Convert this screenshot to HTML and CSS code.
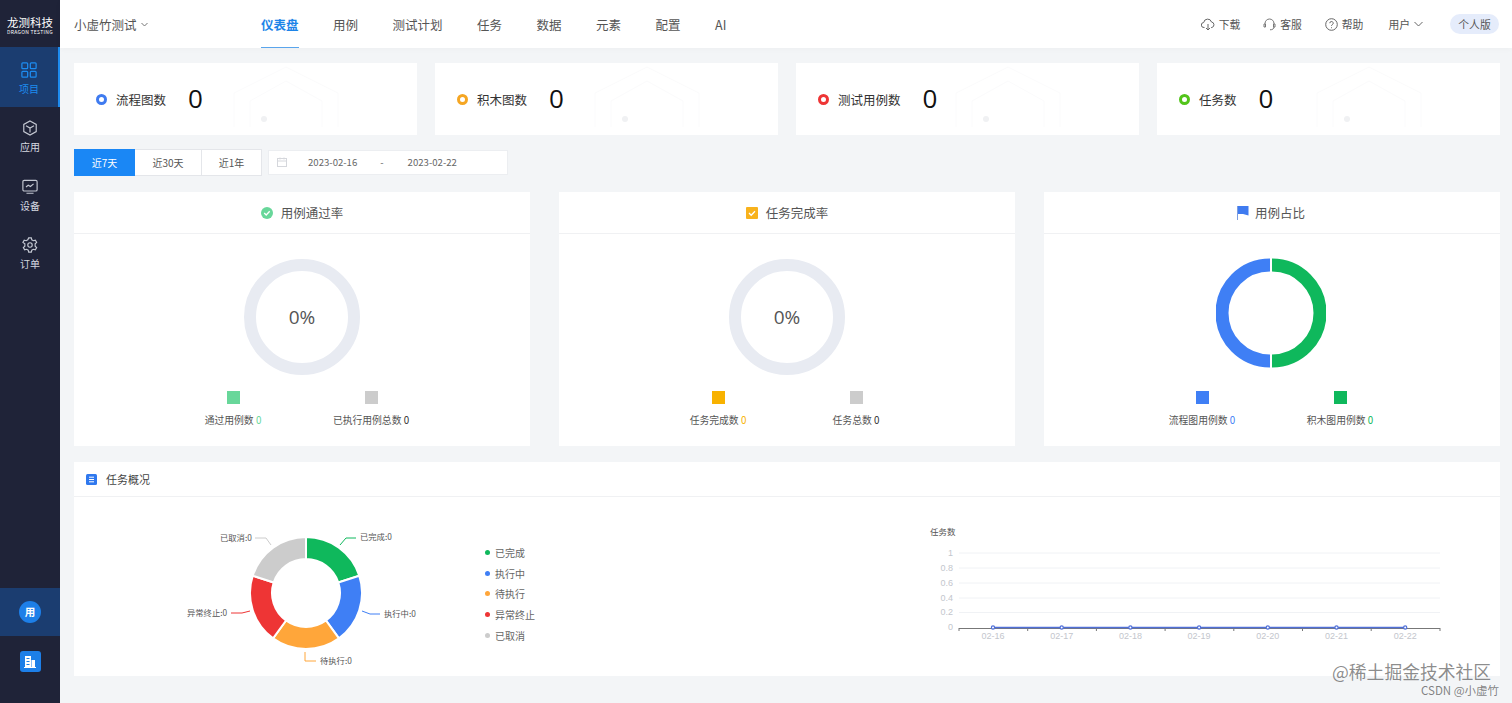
FILE: index.html
```html
<!DOCTYPE html>
<html>
	<head>
		<meta charset="UTF-8">
		<title>仪表盘</title>
		<link rel="stylesheet" href="styles.css">
	</head>
	<body>
		<div class="sidebar">
			<div class="logo">
				<div class="logo-name">龙测科技</div>
				<div class="logo-sub">DRAGON TESTING</div>
			</div>
			<div class="side-item side-active">
				<svg viewBox="0 0 18 18" fill="none" stroke="#1d8cf0" stroke-width="1.400"><rect x="1" y="1" width="6.500" height="6.500" rx="1"/><rect x="10.500" y="1" width="6.500" height="6.500" rx="1"/><rect x="1" y="10.500" width="6.500" height="6.500" rx="1"/><rect x="10.500" y="10.500" width="6.500" height="6.500" rx="1"/></svg>
				<span>项目</span>
			</div>
			<div class="side-item">
				<svg viewBox="0 0 18 18" fill="none" stroke="#c4c8d2" stroke-width="1.300"><path d="M9 1l7 4v8l-7 4-7-4V5z"/><path d="M4.500 6.500L9 9l4.500-2.500M9 9v5"/></svg>
				<span>应用</span>
			</div>
			<div class="side-item">
				<svg viewBox="0 0 18 18" fill="none" stroke="#c4c8d2" stroke-width="1.300"><rect x="1" y="1.500" width="16" height="12" rx="1.500"/><path d="M4.500 9l2.500-2 2.500 1.500 3.500-3M5 16h8"/></svg>
				<span>设备</span>
			</div>
			<div class="side-item">
				<svg viewBox="0 0 18 18" fill="none" stroke="#c4c8d2" stroke-width="1.300"><path d="M7.500 1h3l.5 2.200 1.800 1 2.200-.7 1.500 2.600-1.700 1.600v2.600l1.700 1.600-1.500 2.600-2.200-.7-1.800 1-.5 2.200h-3l-.5-2.200-1.800-1-2.200.7-1.500-2.600 1.700-1.600V7.700L1 6.100l1.500-2.600 2.200.7 1.800-1z"/><circle cx="9" cy="9" r="2.500"/></svg>
				<span>订单</span>
			</div>
			<div class="side-bottom">
				<div class="side-user"><span class="user-circle">用</span></div>
				<div class="side-org">
					<span class="org-box">
						<svg width="14" height="14" viewBox="0 0 14 14" fill="#fff"><path d="M2 1h6v11H2zM8.500 5H12v7H8.500zM1 12h12v1H1z"/><path fill="#1d7fe8" d="M3.500 3h3v1h-3zM3.500 6h3v1h-3zM3.500 9h3v1h-3z"/></svg>
					</span>
				</div>
			</div>
		</div>

		<div class="page">
			<div class="topbar">
				<div class="project">小虚竹测试<svg width="7" height="5" viewBox="0 0 7 5" fill="none" stroke="#777"><path d="M.5 1l3 3 3-3"/></svg></div>
				<div class="tabs">
					<a class="tab tab-active">仪表盘</a>
					<a class="tab">用例</a>
					<a class="tab">测试计划</a>
					<a class="tab">任务</a>
					<a class="tab">数据</a>
					<a class="tab">元素</a>
					<a class="tab">配置</a>
					<a class="tab">AI</a>
				</div>
				<div class="tools">
					<span class="tool">
						<svg width="14" height="13" viewBox="0 0 14 13" fill="none" stroke="#666"><path d="M3.500 9.500H3a2.500 2.500 0 0 1-.3-5A4 4 0 0 1 10.500 4a2.800 2.800 0 0 1 .3 5.500h-.8M7 6v6M5 10l2 2 2-2"/></svg>下载
					</span>
					<span class="tool">
						<svg width="13" height="13" viewBox="0 0 13 13" fill="none" stroke="#777"><path d="M2 6V5.500a4.500 4.500 0 0 1 9 0V6M1 6h1.500v3H1zM10.500 6H12v3h-1.500zM11 9c0 1.800-1.500 2.800-4 2.800"/></svg>客服
					</span>
					<span class="tool tool-help">
						<svg width="13" height="13" viewBox="0 0 13 13" fill="none" stroke="#666"><circle cx="6.500" cy="6.500" r="5.800"/><path d="M4.800 5.200a1.700 1.700 0 1 1 2.500 1.500c-.6.300-.8.600-.8 1.200M6.500 9.300v.9"/></svg>帮助
					</span>
					<span class="tool tool-user">用户<svg width="9" height="6" viewBox="0 0 9 6" fill="none" stroke="#666"><path d="M.5 1l4 4 4-4"/></svg></span>
					<span class="badge">个人版</span>
				</div>
			</div>

			<div class="content">
				<div class="stats">
					<div class="stat">
						<i class="ring ring-blue"></i><span class="stat-label">流程图数</span><span class="stat-num">0</span>
						<svg class="stat-bg" width="110" height="70" viewBox="0 0 110 70" fill="none" stroke="#fbfbfc"><path d="M2 62V28L54 2l52 26v34M18 62V36L54 16l36 20v26"/><circle cx="32" cy="54" r="3" fill="#f0f1f3" stroke="none"/></svg>
					</div>
					<div class="stat">
						<i class="ring ring-orange"></i><span class="stat-label">积木图数</span><span class="stat-num">0</span>
						<svg class="stat-bg" width="110" height="70" viewBox="0 0 110 70" fill="none" stroke="#fbfbfc"><path d="M2 62V28L54 2l52 26v34M18 62V36L54 16l36 20v26"/><circle cx="32" cy="54" r="3" fill="#f0f1f3" stroke="none"/></svg>
					</div>
					<div class="stat">
						<i class="ring ring-red"></i><span class="stat-label">测试用例数</span><span class="stat-num">0</span>
						<svg class="stat-bg" width="110" height="70" viewBox="0 0 110 70" fill="none" stroke="#fbfbfc"><path d="M2 62V28L54 2l52 26v34M18 62V36L54 16l36 20v26"/><circle cx="32" cy="54" r="3" fill="#f0f1f3" stroke="none"/></svg>
					</div>
					<div class="stat">
						<i class="ring ring-green"></i><span class="stat-label">任务数</span><span class="stat-num">0</span>
						<svg class="stat-bg" width="110" height="70" viewBox="0 0 110 70" fill="none" stroke="#fbfbfc"><path d="M2 62V28L54 2l52 26v34M18 62V36L54 16l36 20v26"/><circle cx="32" cy="54" r="3" fill="#f0f1f3" stroke="none"/></svg>
					</div>
				</div>

				<div class="filters">
					<div class="range-btns">
						<span class="range range-on">近7天</span>
						<span class="range range-mid">近30天</span>
						<span class="range">近1年</span>
					</div>
					<div class="dates">
						<svg width="10" height="10" viewBox="0 0 10 10" fill="none" stroke="#d5d7dc"><rect x=".5" y="1.500" width="9" height="8"/><path d="M.5 4h9M3 .5v2M7 .5v2"/></svg>
						<span class="date-from">2023-02-16</span>
						<span class="date-sep">-</span>
						<span class="date-to">2023-02-22</span>
					</div>
				</div>

				<div class="cards">
					<div class="card">
						<div class="card-head">
							<svg width="12" height="12" viewBox="0 0 12 12"><circle cx="6" cy="6" r="6" fill="#68d79a"/><path d="M3.200 6l2 2 3.500-3.800" fill="none" stroke="#fff" stroke-width="1.300"/></svg>
							<span>用例通过率</span>
						</div>
						<div class="ring-wrap">
							<svg width="116" height="116" viewBox="0 0 116 116"><circle cx="58" cy="58" r="52" fill="none" stroke="#e8ebf2" stroke-width="12"/><text class="ring-text" x="58" y="65" text-anchor="middle">0%</text></svg>
						</div>
						<div class="keys">
							<div class="key"><i class="swatch sw-mint"></i><span>通过用例数 <b class="n-mint">0</b></span></div>
							<div class="key"><i class="swatch sw-grey"></i><span>已执行用例总数 <b>0</b></span></div>
						</div>
					</div>
					<div class="card">
						<div class="card-head">
							<svg width="12" height="13" viewBox="0 0 12 13"><rect y="1" width="12" height="12" rx="1" fill="#f8b21c"/><path d="M3 7l2.200 2.200L9 5.200" fill="none" stroke="#fff" stroke-width="1.300"/></svg>
							<span>任务完成率</span>
						</div>
						<div class="ring-wrap">
							<svg width="116" height="116" viewBox="0 0 116 116"><circle cx="58" cy="58" r="52" fill="none" stroke="#e8ebf2" stroke-width="12"/><text class="ring-text" x="58" y="65" text-anchor="middle">0%</text></svg>
						</div>
						<div class="keys">
							<div class="key"><i class="swatch sw-amber"></i><span>任务完成数 <b class="n-amber">0</b></span></div>
							<div class="key"><i class="swatch sw-grey"></i><span>任务总数 <b>0</b></span></div>
						</div>
					</div>
					<div class="card">
						<div class="card-head card-head-share">
							<svg width="12" height="14" viewBox="0 0 12 14"><path d="M1 0h10.500v9.500L6 8H1z" fill="#3f7bf0"/><path d="M.5 0v14" stroke="#7d9ee0"/></svg>
							<span>用例占比</span>
						</div>
						<div class="ring-wrap ring-wrap-share">
							<svg width="110" height="110" viewBox="0 0 110 110" fill="none" stroke-width="13"><path d="M56 7a48 48 0 0 1 0 96" stroke="#0fb85c"/><path d="M54 103a48 48 0 0 1 0-96" stroke="#3f7ff5"/></svg>
						</div>
						<div class="keys keys-share">
							<div class="key"><i class="swatch sw-blue"></i><span>流程图用例数 <b class="n-blue">0</b></span></div>
							<div class="key"><i class="swatch sw-green"></i><span>积木图用例数 <b class="n-green">0</b></span></div>
						</div>
					</div>
				</div>

				<div class="panel">
					<div class="panel-head">
						<svg width="11" height="11" viewBox="0 0 11 11"><rect width="11" height="11" rx="1.500" fill="#2f78ee"/><path d="M3 3.200h5M3 5.500h5M3 7.800h5" stroke="#fff"/></svg>
						<span>任务概况</span>
					</div>
					<div class="panel-body">
						<svg class="pie" width="300" height="170" viewBox="170 510 300 170">
							<g transform="translate(306 593)" stroke="#fff" stroke-width="2">
								<path fill="#0fb85c" d="M0-56A56 56 0 0 1 53.260-17.300L32.340-10.510A34 34 0 0 0 0-34z"/>
								<path fill="#3f7ff5" d="M53.260-17.300A56 56 0 0 1 32.920 45.300L19.980 27.510A34 34 0 0 0 32.340-10.510z"/>
								<path fill="#ffa63a" d="M32.920 45.300A56 56 0 0 1-32.920 45.300L-19.980 27.510A34 34 0 0 0 19.980 27.510z"/>
								<path fill="#ee3535" d="M-32.920 45.300A56 56 0 0 1-53.260-17.300L-32.340-10.510A34 34 0 0 0-19.980 27.510z"/>
								<path fill="#cccccc" d="M-53.260-17.300A56 56 0 0 1 0-56V-34A34 34 0 0 0-32.340-10.510z"/>
							</g>
							<g fill="none">
								<path stroke="#0fb85c" d="M340 545l6-7h10"/>
								<path stroke="#3f7ff5" d="M362 611l8 3h10"/>
								<path stroke="#ffa63a" d="M305 652v9h11"/>
								<path stroke="#ee3535" d="M250 611l-8 2h-11"/>
								<path stroke="#cccccc" d="M271 545l-5-7h-11"/>
							</g>
							<g class="pie-label">
								<text x="360" y="540">已完成:0</text>
								<text x="384" y="617">执行中:0</text>
								<text x="320" y="664">待执行:0</text>
								<text x="187" y="616">异常终止:0</text>
								<text x="220" y="541">已取消:0</text>
							</g>
						</svg>
						<div class="pie-legend">
							<div class="pl-row"><i class="pl-dot pd-green"></i>已完成</div>
							<div class="pl-row"><i class="pl-dot pd-blue"></i>执行中</div>
							<div class="pl-row"><i class="pl-dot pd-orange"></i>待执行</div>
							<div class="pl-row"><i class="pl-dot pd-red"></i>异常终止</div>
							<div class="pl-row"><i class="pl-dot pd-grey"></i>已取消</div>
						</div>
						<svg class="line" width="540" height="135" viewBox="920 515 540 135">
							<text class="line-title" x="930" y="535">任务数</text>
							<g stroke="#f0f2f5">
								<path d="M959 553h481M959 568h481M959 583h481M959 598h481M959 612.500h481"/>
							</g>
							<g class="y-label" text-anchor="end">
								<text x="953" y="556">1</text>
								<text x="953" y="571">0.8</text>
								<text x="953" y="586">0.6</text>
								<text x="953" y="601">0.4</text>
								<text x="953" y="615">0.2</text>
								<text x="953" y="630">0</text>
							</g>
							<path d="M959 628.500h481M959 628v3M1027.700 628v3M1096.400 628v3M1165.100 628v3M1233.800 628v3M1302.500 628v3M1371.200 628v3M1440 628v3" stroke="#777" fill="none"/>
							<path d="M993 627.500h412" stroke="#4f6fd8" stroke-width="1.500"/>
							<g fill="#fff" stroke="#4f6fd8" stroke-width="1.200">
								<circle cx="993" cy="627.500" r="1.600"/>
								<circle cx="1061.700" cy="627.500" r="1.600"/>
								<circle cx="1130.400" cy="627.500" r="1.600"/>
								<circle cx="1199.100" cy="627.500" r="1.600"/>
								<circle cx="1267.800" cy="627.500" r="1.600"/>
								<circle cx="1336.500" cy="627.500" r="1.600"/>
								<circle cx="1405.200" cy="627.500" r="1.600"/>
							</g>
							<g class="y-label" text-anchor="middle">
								<text x="993" y="639">02-16</text>
								<text x="1061.700" y="639">02-17</text>
								<text x="1130.400" y="639">02-18</text>
								<text x="1199.100" y="639">02-19</text>
								<text x="1267.800" y="639">02-20</text>
								<text x="1336.500" y="639">02-21</text>
								<text x="1405.200" y="639">02-22</text>
							</g>
						</svg>
					</div>
				</div>
			</div>
		</div>

		<div class="mark-main">@稀土掘金技术社区</div>
		<div class="mark-sub">CSDN @小虚竹</div>
	</body>
</html>
```

FILE: styles.css
```css
* {
	box-sizing: border-box;
}
html, body {
	margin: 0;
	height: 703px;
	overflow: hidden;
}
body {
	display: flex;
	font-family: "Noto Sans CJK SC", "Liberation Sans", sans-serif;
	font-size: 12px;
	color: #444;
	background-color: #f3f5f7;
}

/* 左侧导航 */
.sidebar {
	display: flex;
	flex-direction: column;
	flex: none;
	width: 60px;
	height: 703px;
	background-color: #1f2338;
}
.logo {
	height: 47px;
	padding-top: 16px;
	text-align: center;
	color: #fff;
}
.logo-name {
	font-size: 11.500px;
	line-height: 13px;
}
.logo-sub {
	font-size: 5px;
	line-height: 6px;
	letter-spacing: .3px;
	white-space: nowrap;
}
.side-item {
	display: flex;
	flex-direction: column;
	align-items: center;
	height: 58.500px;
	padding-top: 13px;
	color: #d5d8e0;
	font-size: 10px;
	line-height: 14px;
}
.side-item svg {
	width: 16px;
	height: 16px;
}
.side-item span {
	margin-top: 4px;
}
.side-active {
	height: 60px;
	padding-top: 15px;
	color: #1d8cf0;
	background-color: #1b3d70;
	border-right: 2px solid #1d8cf0;
}
.side-bottom {
	margin-top: auto;
}
.side-user {
	display: flex;
	align-items: center;
	justify-content: center;
	height: 48px;
	background-color: #1b3d70;
}
.user-circle {
	width: 22px;
	height: 22px;
	line-height: 22px;
	border-radius: 50%;
	text-align: center;
	color: #fff;
	font-size: 10.500px;
	font-weight: 700;
	background-color: #1d7fe8;
}
.side-org {
	display: flex;
	justify-content: center;
	height: 67px;
	padding-top: 15px;
}
.org-box {
	display: flex;
	align-items: center;
	justify-content: center;
	width: 21px;
	height: 21px;
	border-radius: 3px;
	background-color: #1d7fe8;
}

/* 顶部 */
.page {
	flex: 1;
	min-width: 0;
}
.topbar {
	display: flex;
	align-items: center;
	height: 48px;
	padding: 0 13px 0 14px;
	background-color: #fff;
	box-shadow: 0 1px 6px rgba(0, 0, 0, .03);
}
.project {
	display: flex;
	align-items: center;
	gap: 4px;
	width: 187px;
	font-size: 12.500px;
	color: #555;
}
.tabs {
	display: flex;
	gap: 34.500px;
	height: 48px;
}
.tab {
	height: 48px;
	line-height: 49px;
	font-size: 12.500px;
	color: #555;
}
.tab-active {
	font-weight: 700;
	color: #1d84e8;
	border-bottom: 1px solid #5aa5ec;
}
.tools {
	display: flex;
	align-items: center;
	margin-left: auto;
	font-size: 10.800px;
	color: #555;
}
.tool {
	display: flex;
	align-items: center;
	gap: 4px;
	margin-right: 23px;
}
.tool-help {
	margin-right: 25px;
}
.tool-user {
	margin-right: 27px;
}
.badge {
	width: 49px;
	height: 20px;
	line-height: 20px;
	border-radius: 10px;
	text-align: center;
	background-color: #e5ecfb;
}

.content {
	padding: 15px 12px 0 14px;
}

/* 统计卡片 */
.stats {
	display: grid;
	grid-template-columns: repeat(4, 1fr);
	gap: 18px;
}
.stat {
	position: relative;
	display: flex;
	align-items: center;
	height: 72px;
	padding-left: 22px;
	background-color: #fff;
	overflow: hidden;
}
.ring {
	width: 11px;
	height: 11px;
	margin-right: 9px;
	border-radius: 50%;
	border: 3px solid;
}
.ring-blue { border-color: #3f7bf0; }
.ring-orange { border-color: #f5a623; }
.ring-red { border-color: #ee3535; }
.ring-green { border-color: #52c41a; }
.stat-label {
	font-size: 12.500px;
	color: #333;
}
.stat-num {
	margin: 0 0 2px 22px;
	font-size: 26px;
	line-height: 30px;
	font-family: "Open Sans", "Liberation Sans", sans-serif;
	font-weight: 400;
	color: #111;
}
.stat-bg {
	position: absolute;
	left: 158px;
	top: 2px;
}

/* 日期筛选 */
.filters {
	display: flex;
	align-items: center;
	height: 28px;
	margin-top: 13px;
}
.range-btns {
	display: flex;
}
.range {
	width: 61px;
	height: 27px;
	line-height: 26px;
	text-align: center;
	font-size: 10px;
	color: #555;
	background-color: #fff;
	border: 1px solid #e4e6ea;
}
.range-mid {
	width: 66px;
	border-left: none;
	border-right: none;
}
.range-on {
	color: #fff;
	background-color: #1a87f5;
	border-color: #1a87f5;
}
.dates {
	display: flex;
	align-items: center;
	width: 240px;
	height: 25px;
	margin-left: 6px;
	padding-left: 8px;
	font-size: 9.600px;
	color: #666;
	background-color: #fff;
	border: 1px solid #eceef1;
}
.date-from {
	margin-left: 21px;
}
.date-sep {
	margin-left: 23px;
}
.date-to {
	margin-left: 24px;
}

/* 三个环形卡片 */
.cards {
	display: grid;
	grid-template-columns: repeat(3, 1fr);
	gap: 29px;
	margin-top: 16px;
}
.card {
	height: 254px;
	background-color: #fff;
}
.card-head {
	display: flex;
	align-items: center;
	justify-content: center;
	gap: 8px;
	height: 42px;
	font-size: 12.500px;
	color: #555;
	border-bottom: 1px solid #f0f1f3;
}
.card-head-share {
	gap: 6px;
	padding-right: 2px;
}
.ring-wrap {
	display: flex;
	justify-content: center;
	padding-top: 25px;
	height: 157px;
}
.ring-wrap-share {
	padding: 24px 2px 0 0;
}
.ring-text {
	font-size: 19px;
	fill: #555;
	font-family: "Open Sans", "Liberation Sans", sans-serif;
}
.keys {
	display: flex;
	justify-content: center;
}
.keys-share {
	padding-right: 2px;
}
.key {
	display: flex;
	flex-direction: column;
	align-items: center;
	width: 138px;
	font-size: 9.800px;
	color: #555;
}
.key span {
	margin-top: 9px;
	line-height: 14px;
	white-space: nowrap;
}
.key b {
	font-weight: 400;
	color: #333;
}
.swatch {
	width: 13px;
	height: 13px;
}
.sw-mint { background-color: #68d79a; }
.sw-grey { background-color: #cccccc; }
.sw-amber { background-color: #f8b200; }
.sw-blue { background-color: #3f7ff5; }
.sw-green { background-color: #0fb85c; }
.key .n-mint { color: #68d79a; }
.key .n-amber { color: #f8b200; }
.key .n-blue { color: #3f7ff5; }
.key .n-green { color: #0fb85c; }

/* 任务概况 */
.panel {
	height: 214px;
	margin-top: 16px;
	background-color: #fff;
}
.panel-head {
	display: flex;
	align-items: center;
	gap: 9px;
	height: 35px;
	padding-left: 12px;
	font-size: 11px;
	color: #444;
	border-bottom: 1px solid #f0f1f3;
}
.panel-body {
	display: flex;
	align-items: flex-start;
	padding: 13px 0 0 96px;
}
.pie {
	flex: none;
}
.pie-label text {
	font-size: 8.300px;
	fill: #555;
}
.pie-legend {
	flex: none;
	width: 435px;
	margin: 32px 0 0 15px;
}
.pl-row {
	display: flex;
	align-items: center;
	gap: 5px;
	height: 20.700px;
	font-size: 10px;
	color: #666;
}
.pl-dot {
	width: 5px;
	height: 5px;
	border-radius: 50%;
}
.pd-green { background-color: #0fb85c; }
.pd-blue { background-color: #3f7ff5; }
.pd-orange { background-color: #ffa63a; }
.pd-red { background-color: #ee3535; }
.pd-grey { background-color: #cccccc; }
.line {
	flex: none;
	margin-top: 5px;
}
.line-title {
	font-size: 8.500px;
	fill: #555;
}
.y-label text {
	font-size: 9px;
	fill: #c3c6cd;
	font-family: "Liberation Sans", sans-serif;
}

/* 图片水印 */
.mark-main {
	position: absolute;
	left: 1332px;
	top: 658px;
	font-size: 17.800px;
	line-height: 26px;
	color: rgba(90, 90, 90, .7);
	white-space: nowrap;
}
.mark-sub {
	position: absolute;
	left: 1421px;
	top: 682px;
	font-size: 11.500px;
	line-height: 16px;
	color: rgba(90, 90, 90, .75);
	white-space: nowrap;
}
```
